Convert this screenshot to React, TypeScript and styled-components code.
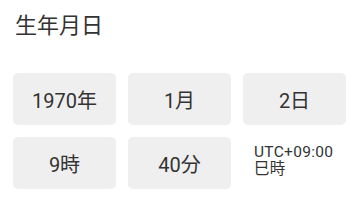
import React from 'react'
import styled, {createGlobalStyle} from 'styled-components'

const Global = createGlobalStyle`
    body {
        margin: 0;
        background: #fff;
        font-family: Roboto, "Noto Sans CJK JP", sans-serif;
        color: #333;
    }
`

const Page = styled.div`
    padding: 10px 13px 0 13px;
`

const Title = styled.h1`
    margin: 0 0 0 2px;
    font-size: 22px;
    font-weight: 400;
    line-height: 32px;
    color: #333;
`

const Grid = styled.div`
    margin-top: 31px;
    display: grid;
    grid-template-columns: repeat(3, 103px);
    grid-auto-rows: 52px;
    column-gap: 12px;
    row-gap: 12px;
`

const Cell = styled.div`
    display: flex;
    align-items: center;
    justify-content: center;
    background: #efefef;
    border-radius: 5px;
    font-size: 20px;
    color: #333;
`

const Zone = styled.div`
    display: flex;
    flex-direction: column;
    justify-content: center;
    padding-left: 11px;
    padding-bottom: 5px;
    font-size: 15.5px;
    line-height: 17px;
    letter-spacing: 0.3px;
    color: #333;
`

export default function App() {
    return (
        <Page>
            <Global />
            <Title>生年月日</Title>
            <Grid>
                <Cell>1970年</Cell>
                <Cell>1月</Cell>
                <Cell>2日</Cell>
                <Cell>9時</Cell>
                <Cell>40分</Cell>
                <Zone>
                    <span>UTC+09:00</span>
                    <span>巳時</span>
                </Zone>
            </Grid>
        </Page>
    )
}
